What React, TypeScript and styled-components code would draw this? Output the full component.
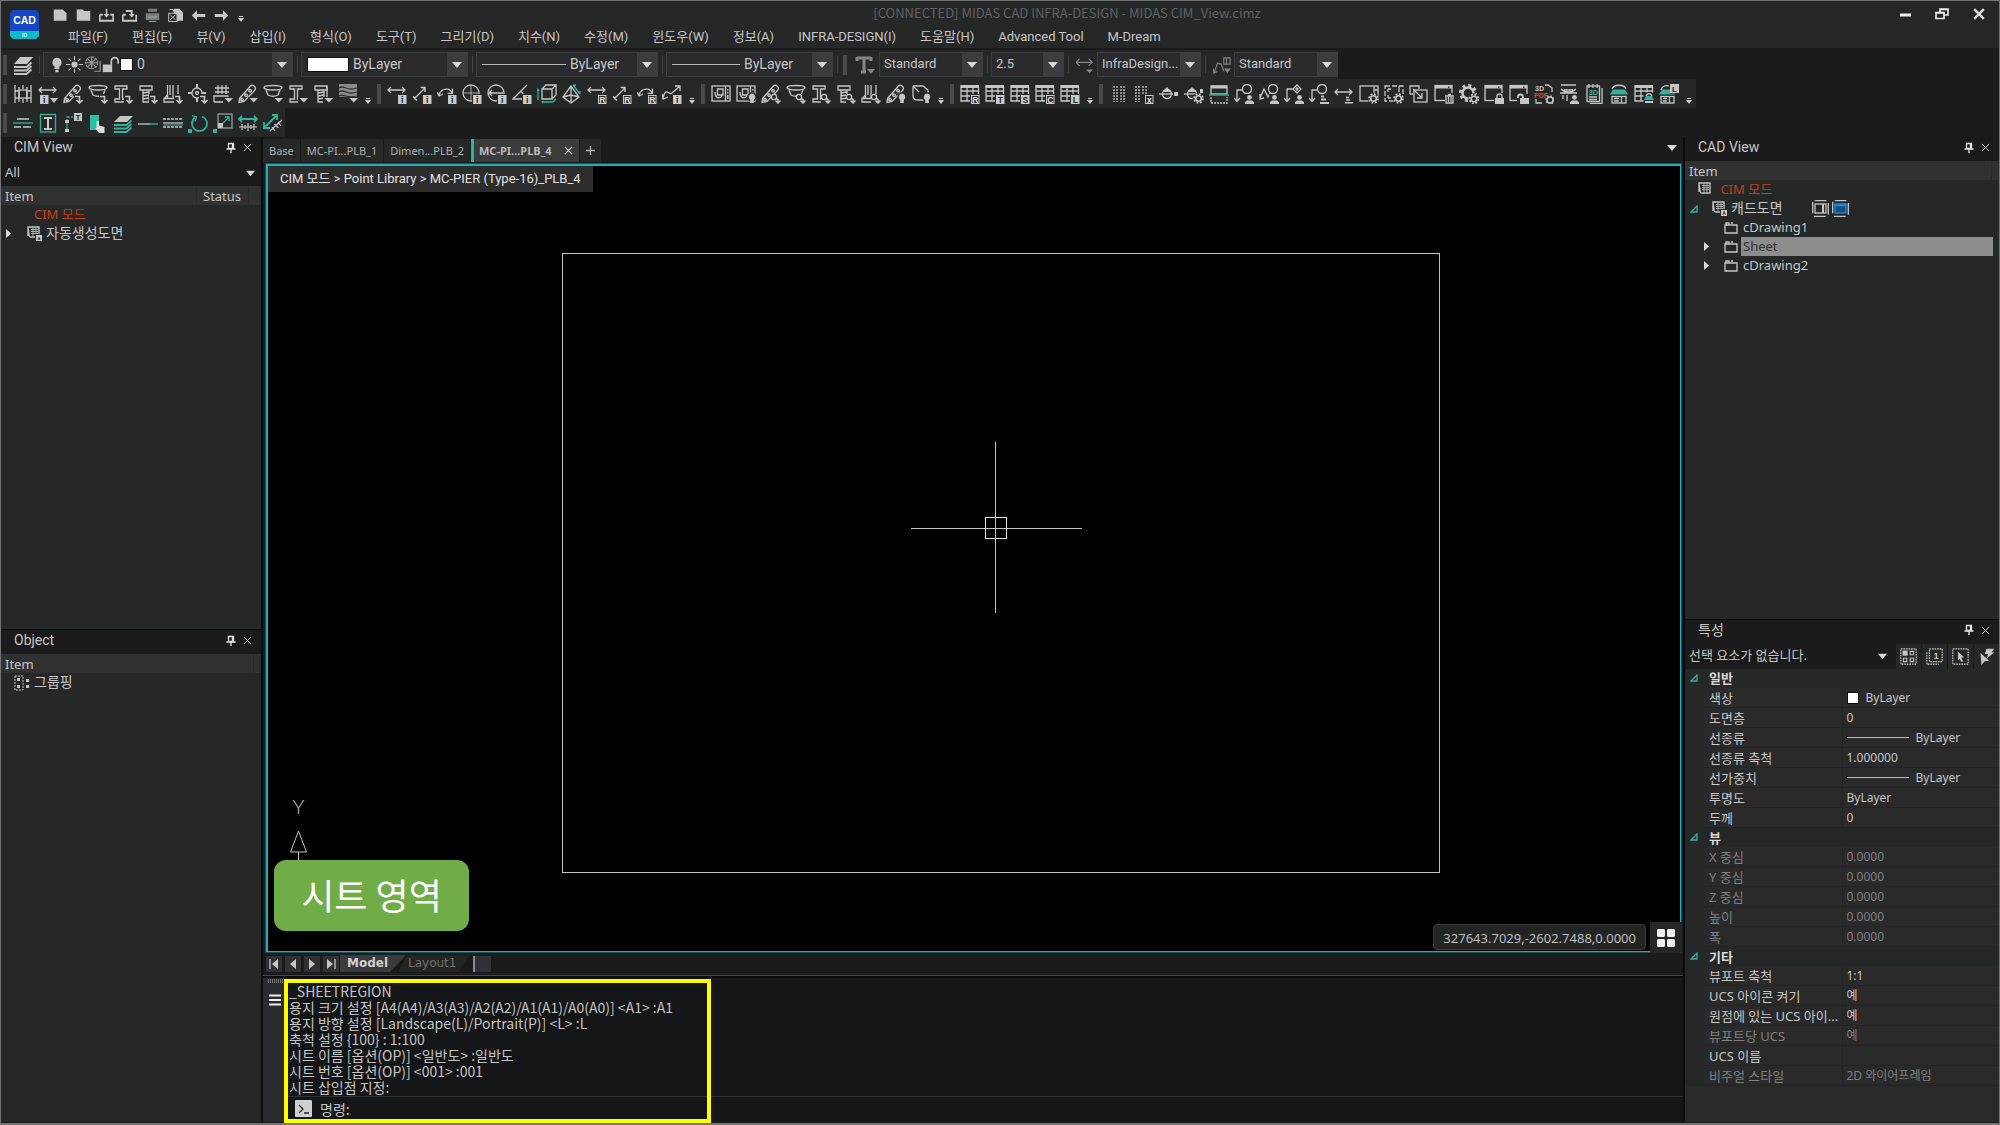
import React, { ReactNode } from "react";
import styled, { createGlobalStyle, css } from "styled-components";

const c = {
  window: "#262828",
  dark: "#1b1b1b",
  field: "#2b2b2e",
  fieldButton: "#3d3d40",
  line: "#3c3c3e",
  header: "#303232",
  text: "#c6c6c6",
  dim: "#808080",
  teal: "#35b09c",
  cyan: "#22adb5",
  red: "#c0401f",
  blue: "#1f86d8",
};

const sans = `"Noto Sans", "Noto Sans CJK KR", sans-serif`;
const round = `Roboto, "Noto Sans CJK KR", sans-serif`;
const hangul = `"Noto Sans CJK KR", sans-serif`;

const GlobalStyle = createGlobalStyle`
  *, *::before, *::after { box-sizing: border-box; }
  body { margin: 0; background: ${c.dark}; }
  button, select, input { font: inherit; color: inherit; }
  button { padding: 0; border: 0; background: none; cursor: pointer; }
`;

/* ---------- window ---------- */

const Window = styled.div`
  display: flex;
  flex-direction: column;
  min-height: 100vh;
  padding-bottom: 1px;
  border: 1px solid #737675;
  border-bottom-width: 2px;
  background: ${c.dark};
  color: ${c.text};
  font: 13px/19px ${sans};
`;

const TitleBar = styled.header`
  display: flex;
  height: 47px;
  background: ${c.window};
`;

const LogoBox = styled.div`
  width: 48px;
  padding: 9px;
`;

const TitleColumn = styled.div`
  flex: 1;
  display: flex;
  flex-direction: column;
`;

const TitleRow = styled.div`
  display: flex;
  align-items: center;
  height: 28px;
  padding-right: 2px;
`;

const QuickBar = styled.div`
  display: flex;
  align-items: center;
`;

const QuickButton = styled.button`
  display: grid;
  place-items: center;
  width: 23px;
  height: 22px;
`;

const Title = styled.h1`
  flex: 1;
  margin: 0;
  padding-bottom: 5px;
  text-align: center;
  font: 400 13px/19px ${hangul};
  color: #5f6161;
`;

const WindowButton = styled.button`
  display: grid;
  place-items: center;
  width: 37px;
  height: 26px;
  margin-bottom: 2px;
`;

const MenuBar = styled.nav`
  display: flex;
  height: 17px;
  padding-left: 7px;
`;

const MenuItem = styled.button`
  height: 15px;
  padding: 0 12px;
  font: 13px/15px ${round};
  white-space: nowrap;
`;

/* ---------- toolbars ---------- */

const Toolbars = styled.div`
  display: flex;
  flex-direction: column;
  align-items: flex-start;
  padding-top: 2px;
`;

const ToolRow = styled.div`
  display: flex;
  align-items: center;
  height: 29px;
  background: ${c.window};
`;

const Grip = styled.span`
  width: 4px;
  height: 20px;
  margin: 0 3px 0 2px;
  background-image: radial-gradient(#4a4a4a 1px, transparent 1px);
  background-size: 2px 2px;
`;

const Rule = styled.span`
  width: 1px;
  height: 17px;
  margin: 0 3px 0 4px;
  background: #444;
`;

const ToolButton = styled.button<{ $wide?: number }>`
  display: grid;
  place-items: center;
  width: ${(p) => p.$wide ?? 25}px;
  height: 29px;
`;

const OverflowButton = styled.button<{ $short?: boolean }>`
  display: grid;
  place-items: center;
  width: 15px;
  height: ${(p) => (p.$short ? 22 : 29)}px;
  padding-top: ${(p) => (p.$short ? 8 : 15)}px;
`;

const Combo = styled.label<{ $width: number; $small?: boolean }>`
  display: flex;
  align-items: center;
  width: ${(p) => p.$width}px;
  height: 25px;
  border: 1px solid ${c.line};
  background: ${c.field};
  font: ${(p) => (p.$small ? 13 : 14)}px/18px ${round};
`;

const ComboIcons = styled.span`
  display: flex;
  align-items: center;
  gap: 1px;
  padding-left: 5px;
`;

const ComboSelect = styled.select`
  flex: 1;
  min-width: 0;
  height: 21px;
  padding: 0 0 2px 4px;
  border: 0;
  background: ${c.field};
  appearance: none;
`;

const ComboArrow = styled.span`
  display: grid;
  place-items: center;
  width: 20px;
  height: 23px;
  background: ${c.fieldButton};
`;

const Swatch = styled.span<{ $width: number; $height: number }>`
  flex: none;
  width: ${(p) => p.$width}px;
  height: ${(p) => p.$height}px;
  border: 1px solid #111;
  background: #fff;
`;

const LineSample = styled.span<{ $width: number }>`
  flex: none;
  width: ${(p) => p.$width}px;
  height: 1px;
  background: #b9b9b9;
`;

/* ---------- body ---------- */

const Body = styled.main`
  flex: 1;
  display: grid;
  grid-template-columns: 260px minmax(0, 1fr) 314px;
  gap: 2px;
  background: #0c0c0c;
`;

const Side = styled.aside`
  display: flex;
  flex-direction: column;
  gap: 1px;
`;

const Panel = styled.section<{ $grow: number }>`
  flex: ${(p) => p.$grow} 1 0;
  display: flex;
  flex-direction: column;
  background: ${c.window};
`;

const PanelHead = styled.div`
  display: flex;
  align-items: center;
  height: 24px;
  padding: 0 5px 3px 13px;
  background: ${c.dark};
`;

const PanelTitle = styled.h2`
  flex: 1;
  margin: 0;
  font: 400 14px/19px ${round};
`;

const PanelButton = styled.button`
  display: grid;
  place-items: center;
  width: 17px;
  height: 18px;
`;

const FilterRow = styled.label`
  display: flex;
  align-items: center;
  height: 25px;
  padding-right: 6px;
  background: ${c.dark};
`;

const PlainSelect = styled.select`
  flex: 1;
  min-width: 0;
  height: 23px;
  padding: 0 0 2px 4px;
  border: 0;
  background: ${c.dark};
  appearance: none;
`;

const Tree = styled.table`
  width: 100%;
  border-collapse: collapse;
  table-layout: fixed;
`;

const TreeHead = styled.th<{ $width?: number }>`
  width: ${(p) => (p.$width ? `${p.$width}px` : "auto")};
  height: 19px;
  padding: 1px 0 0 ${(p) => (p.$width ? 6 : 4)}px;
  border-right: 1px solid #292b2b;
  background: ${c.header};
  text-align: left;
  font-weight: 400;
  line-height: 18px;
`;

const TreeCell = styled.td`
  height: 19px;
  padding: 0;
`;

const TreeLine = styled.div<{ $indent: number }>`
  display: flex;
  align-items: center;
  height: 19px;
  padding-left: ${(p) => p.$indent}px;
`;

const Expander = styled.button`
  display: grid;
  place-items: center;
  width: 12px;
  height: 18px;
`;

const TreeIcon = styled.span<{ $left?: number }>`
  display: grid;
  place-items: center;
  width: 20px;
  height: 18px;
  margin-left: ${(p) => p.$left ?? 0}px;
`;

const TreeText = styled.span<{ $mode?: "red" | "selected" | "large" }>`
  padding: 0 2px;
  height: 19px;
  line-height: 18px;
  white-space: nowrap;
  ${(p) => p.$mode === "red" && css`color: ${c.red};`}
  ${(p) => p.$mode === "large" && css`font-size: 14px;`}
  ${(p) =>
    p.$mode === "selected" &&
    css`
      flex: 1;
      margin-right: 6px;
      background: #8c8c8c;
      color: #303030;
    `}
`;

/* ---------- workspace ---------- */

const Workspace = styled.section`
  display: flex;
  flex-direction: column;
  min-width: 0;
  background: ${c.dark};
`;

const Tabs = styled.div`
  display: flex;
  height: 26px;
  padding: 2px 3px 1px 0;
  gap: 1px;
`;

const Tab = styled.button<{ $active?: boolean }>`
  display: flex;
  align-items: center;
  gap: 13px;
  padding: 0 6px;
  background: ${c.window};
  color: #b0b0b0;
  font-size: 11px;
  white-space: nowrap;
  ${(p) =>
    p.$active &&
    css`
      padding-left: 5px;
      border-left: 3px solid ${c.teal};
      background: #3a3b3b;
      color: #b9b9b9;
      font-weight: 700;
    `}
`;

const TabSpace = styled.span`
  flex: 1;
`;

const Canvas = styled.div`
  position: relative;
  flex: 1;
  margin: 0 1px 1px 2px;
  border: solid ${c.cyan};
  border-width: 3px 2px 2px 3px;
  outline: 1px solid #12565a;
  outline-offset: -1px;
  background: #000;
`;

const Drawing = styled.svg`
  position: absolute;
  inset: 0;
  width: 100%;
  height: 100%;
`;

const Breadcrumb = styled.div`
  position: absolute;
  left: 0;
  top: 0;
  height: 26px;
  padding: 0 12px;
  background: #2d2d2e;
  color: #e2e2e2;
  font: 13px/25px ${round};
  white-space: nowrap;
`;

const Callout = styled.div`
  position: absolute;
  left: 6px;
  bottom: 20px;
  display: grid;
  place-items: center;
  width: 195px;
  height: 71px;
  padding-bottom: 4px;
  border-radius: 12px;
  background: #70ad47;
  color: #fff;
  font: 36px/40px ${hangul};
`;

const Coordinates = styled.output`
  position: absolute;
  right: 34px;
  bottom: 1px;
  height: 26px;
  padding: 0 9px;
  border: 1px solid #3a3b3b;
  border-radius: 4px;
  background: #232525;
  color: #bdbdbd;
  font: 13px/27px ${sans};
`;

const GridButton = styled.button`
  position: absolute;
  right: -2px;
  bottom: -2px;
  display: grid;
  place-items: center;
  width: 32px;
  height: 31px;
  background: #252727;
`;

const LayoutRow = styled.div`
  display: flex;
  align-items: center;
  gap: 3px;
  height: 22px;
  padding: 0 0 2px 3px;
  border-bottom: 1px solid #474747;
`;

const StepButton = styled.button`
  display: grid;
  place-items: center;
  width: 16px;
  height: 16px;
  background: #303134;
`;

const LayoutTabs = styled.div`
  display: flex;
  height: 17px;
  margin-left: -2px;
`;

const LayoutTab = styled.button<{ $active?: boolean }>`
  width: ${(p) => (p.$active ? 66 : 72)}px;
  margin-left: ${(p) => (p.$active ? 0 : -8)}px;
  padding: 0 0 1px ${(p) => (p.$active ? 7 : 10)}px;
  background: ${(p) => (p.$active ? "#3a3b3c" : "#232525")};
  clip-path: ${(p) =>
    p.$active
      ? "polygon(0 0, 100% 0, 50px 100%, 0 100%)"
      : "polygon(9px 0, 100% 0, 60px 100%, 0 100%)"};
  color: ${(p) => (p.$active ? "#d0d0d0" : "#707272")};
  font: ${(p) => (p.$active ? 700 : 400)} 12px/15px "DejaVu Sans", sans-serif;
  text-align: left;
`;

const LayoutEnd = styled.span`
  width: 18px;
  height: 16px;
  border-left: 2px solid #8c8c8c;
  background: #303134;
`;

const Command = styled.div`
  position: relative;
  display: flex;
  height: 146px;
  border-top: 2px solid #0c0c0c;
  background: #151618;
`;

const CommandStrip = styled.div`
  display: flex;
  flex-direction: column;
  align-items: center;
  gap: 11px;
  width: 24px;
  padding-top: 1px;
  background: #2a2b2e;
`;

const StripGrip = styled.span`
  width: 15px;
  height: 4px;
  background: repeating-linear-gradient(90deg, #777 0 1px, transparent 1px 2px);
`;

const CommandMain = styled.div`
  flex: 1;
  display: flex;
  flex-direction: column;
  min-width: 0;
`;

const Log = styled.div`
  flex: 1;
  display: flex;
  flex-direction: column;
  justify-content: flex-end;
  padding: 0 0 1px 2px;
  font: 14px/16px ${hangul};
  color: #c4c4c4;
`;

const LogLine = styled.div`
  flex: none;
  height: 16px;
  white-space: pre;
`;

const Prompt = styled.label`
  display: flex;
  align-items: center;
  gap: 8px;
  height: 26px;
  padding: 0 0 2px 8px;
  border-top: 1px solid #303133;
  font: 14px/16px ${hangul};
`;

const PromptInput = styled.input`
  flex: 1;
  height: 20px;
  border: 0;
  outline: 0;
  background: transparent;
`;

const Highlight = styled.div`
  position: absolute;
  left: 21px;
  top: 1px;
  width: 427px;
  bottom: -1px;
  border: 4px solid #ffff00;
  pointer-events: none;
`;

/* ---------- properties ---------- */

const SelectionRow = styled.div`
  display: flex;
  height: 25px;
  background: ${c.dark};
`;

const SelectionLabel = styled.label`
  flex: 1;
  display: flex;
  align-items: center;
  padding-right: 8px;
`;

const SelectionButton = styled.button`
  display: grid;
  place-items: center;
  width: 25px;
  height: 25px;
  margin-left: 1px;
  background: ${c.window};
`;

const Properties = styled.table`
  width: 100%;
  border-collapse: collapse;
  table-layout: fixed;
  font-size: 12px;
`;

const Gutter = styled.td`
  width: 19px;
  padding: 0 0 0 3px;
  background: ${c.window};
`;

const GroupTitle = styled.th`
  height: 19px;
  padding: 0 5px;
  background: ${c.window};
  text-align: left;
  font-size: 13px;
  line-height: 18px;
  color: #dadada;
`;

const PropName = styled.th<{ $dim?: boolean }>`
  width: 138px;
  height: 20px;
  padding: 0 0 0 5px;
  border-right: 1px solid #242424;
  border-bottom: 1px solid #242424;
  text-align: left;
  font-weight: 400;
  font-size: 13px;
  line-height: 18px;
  white-space: nowrap;
  color: ${(p) => (p.$dim ? c.dim : c.text)};
`;

const PropValue = styled.td<{ $dim?: boolean }>`
  padding: 0 0 0 4px;
  border-bottom: 1px solid #242424;
  line-height: 18px;
  color: ${(p) => (p.$dim ? c.dim : c.text)};
`;

const ValueLine = styled.div`
  display: flex;
  align-items: center;
  gap: 7px;
`;

const PropPanel = styled(Panel)`
  background: #2a2a2a;
`;

/* ---------- icons ---------- */

const Svg = styled.svg`
  display: block;
  fill: none;
  stroke: currentColor;
  stroke-width: 1.3;
`;

const Icon = ({ size = 20, box = 20, children }: { size?: number; box?: number; children: ReactNode }) => (
  <Svg width={size} height={size} viewBox={`0 0 ${box} ${box}`} aria-hidden="true">
    {children}
  </Svg>
);

const F = ({ d, fill = "currentColor" }: { d: string; fill?: string }) => <path d={d} fill={fill} stroke="none" />;
const P = ({ d, color, w }: { d: string; color?: string; w?: number }) => (
  <path d={d} stroke={color ?? "currentColor"} strokeWidth={w ?? 1.3} />
);

const Letter = ({ x, y, size = 8, color = "currentColor", children }: { x: number; y: number; size?: number; color?: string; children: string }) => (
  <text x={x} y={y} fontSize={size} fontWeight={700} fontFamily="Liberation Sans, sans-serif" textAnchor="middle" fill={color} stroke="none">
    {children}
  </text>
);

const Badge = ({ t = "i", solid = true, x = 11 }: { t?: string; solid?: boolean; x?: number }) => (
  <>
    <rect x={x - 1} y={10} width={10} height={10} fill={c.window} stroke="none" />
    <rect x={x + 0.5} y={11.5} width={7.5} height={8} fill={solid ? "#c9c9c9" : c.window} stroke="#c9c9c9" strokeWidth={1} />
    <Letter x={x + 4.25} y={18.5} size={8.5} color={solid ? "#1f1f1f" : "#e5e5e5"}>{t}</Letter>
  </>
);
const Down = () => (
  <>
    <F d="M11 10h9v10h-9z" fill={c.window} />
    <P d="M12 12.500h4.500v6M13.500 16l3 3 3-3" w={1.6} />
  </>
);
const Tri = () => (
  <>
    <F d="M10 13h10v7H10z" fill={c.window} />
    <F d="M11.500 14h8.500l-4.250 4.500z" />
  </>
);
const Gear = ({ x = 14.5, y = 14.5 }: { x?: number; y?: number }) => (
  <>
    <circle cx={x} cy={y} r={5.8} fill={c.window} stroke="none" />
    <circle cx={x} cy={y} r={4.4} strokeWidth={1.8} strokeDasharray="1.8 1.65" />
    <circle cx={x} cy={y} r={2.8} strokeWidth={1.6} />
  </>
);
const Person = () => (
  <>
    <F d="M10 10h10v10H10z" fill={c.window} />
    <F d="M15.500 11a2.400 2.400 0 1 1 0 4.800 2.400 2.400 0 0 1 0-4.800zM11 20v-2l2-1.500h5l2 1.500v2z" />
  </>
);
const Bars = () => <P d="M12 12.500h3M12 15.500h5M11 19h9" w={1.8} />;
const Node = () => (
  <>
    <F d="M10 10h10v10H10z" fill={c.window} />
    <circle cx={13} cy={13} r={2.6} />
    <P d="M15 14.500l2 1v3.500M14.500 16.500l2.500 2.500 2.500-2.500" w={1.5} />
  </>
);
const Bulb = () => (
  <>
    <circle cx={16} cy={13} r={4.8} fill={c.window} stroke="none" />
    <F d="M16 9.500a3.600 3.600 0 0 1 1.800 6.500v3h-3.600v-3a3.600 3.600 0 0 1 1.800-6.500z" />
  </>
);
const Frame = () => (
  <>
    <rect x={1} y={1.5} width={17} height={15} />
    <P d="M1 3h17" w={3} />
    <F d="M14 2.500h1.500V4H14z" fill="#333" />
  </>
);
const Lock = () => (
  <>
    <F d="M10 9h10v11H10z" fill={c.window} />
    <path d="M13 14.500v-2a2.500 2.500 0 0 1 5 0v2" />
    <F d="M11 14h9v6h-9z" />
  </>
);

const pen = <P d="M1.500 14.500 12 2.500a3 3 0 0 1 4.500 4L6 17.500l-5 1zM4 14.500a1.200 1.200 0 1 0 .1 0M8 10a1.200 1.200 0 1 0 .1 0M12 5.500a1.200 1.200 0 1 0 .1 0" />;
const slab = <P d="M1 3.500C1 2 5 1.500 10 1.500s9 .5 9 2S15 6 10 6 1 5 1 3.500zM3 6l2 5c3 1.500 7 1.500 10 0l2-5" />;
const beam = <P d="M2 2h12v3H9.500v10H14v3H2v-3h4.500V5H2z" />;
const bolt = <P d="M2 2h12v4H2zM5 6v12h6V6M5 9l6-1M5 12l6-1M5 15l6-1" />;
const piles = <P d="M4.500 1v13M10 1v13M15 1v13M7 1v10M1 14.500h14v3.500H1zM4.500 11l-3 3.500" />;
const hDim = <P d="M1 6h17M4 3 1 6l3 3M15 3l3 3-3 3" />;
const diag = <P d="M2 15 13 4M8.500 3.500H13V8M1 12.500l4 4" />;
const arc = <P d="M2 11C4 4 13 3 15 9M15.500 4.500V9.500H10.500M0 8l2 4 4-2" />;
const gridShape = (
  <>
    <path d="M1 2.500h18" strokeWidth={3} />
    <P d="M1 1v16h9M7 3v14M13 3v8M18.500 3v8M1 7h18M1 12h10" />
  </>
);
const leader = (
  <>
    <circle cx={13} cy={5} r={4.5} />
    <P d="M8.500 6H3v11M0 14l3 3.500 3-3.500" />
  </>
);
const lens = (
  <>
    <rect x={1} y={2} width={18} height={15} />
    <P d="M14.500 2v15M4 8c0 8 7 7 8 1M6.500 5H12v6H6.500z" />
    <F d="M16 5h1.500v1.500H16zM16 8h1.500v1.500H16zM16 11h1.500v4H16z" />
  </>
);

const groupA: [string, ReactNode][] = [
  ["Grid lines", <><P d="M2 1v18M6 3v15M14 3v15M18 1v18M10 1v4M10 15v4M2 7h4M14 7h4M2 14h4M14 14h4" /><rect x={6} y={6} width={8} height={8} /></>],
  ["Dimension info", <>{hDim}<Badge x={2} /><F d="M12 14h8l-4 5z" /></>],
  ["Bridge pen", <>{pen}<Down /></>],
  ["Deck", <>{slab}<Down /></>],
  ["Girder", <>{beam}<Down /></>],
  ["Bolt", <>{bolt}<Down /></>],
  ["Piles", <>{piles}<Down /></>],
  ["Target", <><circle cx={9} cy={9} r={5} /><circle cx={9} cy={9} r={1.500} /><P d="M9 0v4M9 14v4M0 9h4M14 9h4" w={2} /><Down /></>],
  ["Pile cap", <><P d="M5 1v9M9 1v9M13 1v9M2 4h14M2 8h14M1 18V12h14v3M1 18h11" /><Tri /></>],
  ["Pen list", <>{pen}<Tri /></>],
  ["Deck list", <>{slab}<Tri /></>],
  ["Girder list", <>{beam}<Tri /></>],
  ["Bolt list", <>{bolt}<P d="M14 2v12" /><Tri /></>],
  ["Terrain", <><F d="M1 0h18v13H1z" fill="#8b8d8d" /><P d="M1 4c5-4 7 4 18 0M1 8c5-4 8 4 18 0M1 12c5-3 8 3 18 0" color="#333" /><Tri /></>],
];
const groupB: [string, ReactNode][] = [
  ["Linear info", <>{hDim}<Badge /></>],
  ["Aligned info", <>{diag}<Badge /></>],
  ["Arc info", <>{arc}<Badge /></>],
  ["Radius info", <><circle cx={9} cy={9} r={8} /><P d="M1 9h15M9 2v14" w={0.8} /><Badge /></>],
  ["Diameter info", <><circle cx={9} cy={9} r={8} /><P d="M2 9h14M5 6 2 9l3 3" /><Badge /></>],
  ["Angle info", <><P d="M15 1 1 15h12M8 7c3 1 4 4 4 8" /><Badge /></>],
  ["Solid size", <><P d="M5 5 9 1h10v10l-4 4M5 5h10v10H5zM15 5l4-4" /><P d="M1 5v11M0 7l1-2 1 2M5 18h11M6 17l-1 1 1 1M16 18l3-3" color={c.teal} /></>],
  ["Pyramid size", <><P d="M9 2 1 13l8 6 8-6zM9 2v17M1 13l8-2 8 2" /><P d="M11 1l7 9M11 1h3M18 10V7" color={c.teal} /></>],
  ["Linear result", <>{hDim}<Badge t="R" solid={false} /></>],
  ["Aligned result", <>{diag}<Badge t="R" solid={false} /></>],
  ["Arc result", <>{arc}<Badge t="R" solid={false} /></>],
  ["Curve info", <><P d="M1 14c3-12 6-2 9-5l8-7M13 2h5v5M0 10l1 5 5-2" /><Badge /></>],
];
const groupC: [string, ReactNode][] = [
  ["Section view", lens],
  ["Section light", <>{lens}<Bulb /></>],
  ["Pen node", <>{pen}<Node /></>],
  ["Deck node", <>{slab}<Node /></>],
  ["Girder node", <>{beam}<Node /></>],
  ["Bolt node", <>{bolt}<Node /></>],
  ["Pile node", <>{piles}<Node /></>],
  ["Pen light", <>{pen}<Bulb /></>],
  ["Shape light", <><path d="M3 2h9l5 4v7c0 2-1 3-3 3H7c-3 0-5-1-5-4V4c0-1 0-2 1-2z" /><P d="M3 3l5 5" /><Bulb /></>],
];
const groupD: [string, ReactNode][] = [
  ["Table R", <>{gridShape}<Badge t="R" solid={false} /></>],
  ["Table T", <>{gridShape}<Badge t="T" /></>],
  ["Table S", <>{gridShape}<Badge t="S" /></>],
  ["Table C", <>{gridShape}<Badge t="C" solid={false} /></>],
  ["Table L", <>{gridShape}<Badge t="L" /></>],
];
const dots = (
  <g strokeDasharray="2 1">
    <P d="M5 2v16M8 2v16M12 2v16M15 2v16" />
  </g>
);
const groupE: [string, ReactNode][] = [
  ["Hatch", dots],
  ["Remove hatch", <><g strokeDasharray="2 1"><P d="M2 2v16M5 2v16M9 2v8M12 2v8" /></g><Badge t="x" solid={false} /></>],
  ["Marker", <><circle cx={8} cy={10} r={4.500} /><P d="M0 10h14" /><F d="M3.500 8 8 3l4.500 5zM15 8h4v4h-4z" /></>],
  ["Marker settings", <><circle cx={8} cy={10} r={4.500} /><P d="M0 10h14" /><F d="M3.500 8 8 3l4.500 5zM16 5h3v4h-3z" /><Gear /></>],
  ["Split sheet", <><rect x={2} y={2} width={16} height={8} /><P d="M2 3h16" w={3} /><g strokeDasharray="2 1"><P d="M2 13v6h16v-6" /></g><P d="M0 11h20" color={c.teal} /></>],
  ["Leader user", <>{leader}<Person /></>],
  ["Leader curve user", <><circle cx={14} cy={5} r={4.500} /><P d="M1 14 5 5l4 8 2-4M1 10v5l4-1" /><Person /></>],
  ["Leader node user", <><P d="M13 1l4 4-4 4-4-4zM9 5H3v12M0 14l3 3.500 3-3.500" /><circle cx={13} cy={5} r={1} /><Person /></>],
  ["Leader list", <>{leader}<Bars /></>],
  ["Dimension list", <><P d="M1 8h17M4 5 1 8l3 3M15 5l3 3-3 3" /><P d="M12 13.500h3M12 16h4M11 18.800h8" w={1.500} /></>],
  ["Sheet settings", <><rect x={1} y={2} width={18} height={15} /><P d="M15 2v8M15 6h4" /><Gear /></>],
  ["Region settings", <><rect x={1} y={2} width={18} height={15} strokeDasharray="5 2" /><P d="M4 5h3M4 5v3M4 14v-3M4 14h3M15 2v6" /><Gear /></>],
  ["Move region", <><P d="M1 10V2h9v3M1 10h3" /><rect x={5} y={6} width={13} height={12} /><P d="M4 5l9 9M13 9v5H8" /></>],
  ["Delete sheet", <><Frame /><F d="M11 9h9v11h-9z" fill={c.window} /><P d="M11 12h9M12 13v6h7v-6M14.500 13v5M17 13v5M14 10.500h3" /></>],
  ["Options", <><circle cx={9} cy={9} r={7.500} strokeWidth={3} strokeDasharray="3 2.890" /><circle cx={9} cy={9} r={5.500} strokeWidth={2.500} /><Gear x={15} y={15} /></>],
  ["Lock sheet", <><Frame /><Lock /></>],
  ["Unlock sheet", <><Frame /><F d="M8 10h12v10H8z" fill={c.window} /><P d="M9 14v-1a2.500 2.500 0 0 1 5 0v1" w={1.800} /><F d="M11 14h9v6h-9z" /></>],
  ["3D PDF", <><Letter x={5.500} y={7} size={7}>3D</Letter><P d="M11 1h3l4 3v4M2 15v4h6" /><Letter x={7} y={14} size={7} color="#e0462b">PDF</Letter><circle cx={16} cy={16} r={3} strokeWidth={1.500} /><circle cx={16} cy={16} r={4} strokeWidth={1.500} strokeDasharray="1.500 1.640" /></>],
  ["Section user", <><P d="M2 1h15M2 5c4 4 11 4 15 0M1 9h17M4 11v4M8 11v6M5 6h9" /><Person /></>],
  ["3D report", <><P d="M6 19.500h12V4" /><rect x={3} y={2} width={12.500} height={15.500} /><P d="M5 0v4M9 0v4M13 0v4M5 13h8M5 15.500h8" /><Letter x={9.500} y={11} size={7.500} color={c.teal}>3D</Letter></>],
  ["Stamp", <><P d="M3 5c2-5 12-5 14 0" /><F d="M1 10.500l3-5h12l3 5z" fill={c.teal} /><rect x={3} y={12.500} width={14} height={6.500} /><P d="M5 14.500h5M5 17h5M12.500 12v7" /></>],
  ["Table stamp", <>{gridShape}<F d="M9.500 8.500h10.500V20H9.500z" fill={c.window} /><P d="M12 12c1-3 5-3 6 0" /><F d="M10 16l2-4h6l2 4z" fill={c.teal} /><P d="M11 18h8" w={2} /></>],
  ["Stamp L", <><P d="M2 6c1-4 5-5 8-4" /><F d="M0 10.500l3-5h8v4h5v1z" fill={c.teal} /><rect x={2} y={12.500} width={13} height={6.500} /><P d="M4 14.500h4M4 17h4M10.500 12v7" /><F d="M11 0h9v9h-9z" /><Letter x={15.500} y={7.500} size={8} color="#222">L</Letter></>],
];
const row3: [string, ReactNode][] = [
  ["Align lines", <><P d="M4 6h12M1 14h7M10 14h8" /><P d="M0 10h20" color={c.teal} /></>],
  ["Section frame", <><rect x={2.500} y={1.500} width={15} height={17.500} stroke={c.teal} /><P d="M6 5h8M10 5v11M6 16h8" w={2} /></>],
  ["Leader text", <><g strokeDasharray="3 1.500"><P d="M4 9V4h6" color={c.teal} /></g><P d="M4 9v9" color={c.teal} /><F d="M2 7h4v3H2zM2 16h4v3H2zM11 0h8v8h-8z" /><Letter x={15} y={7} size={8} color="#222">T</Letter></>],
  ["Pick block", <><F d="M2 2h9v15H2z" fill="#27c2a6" /><F d="M8.500 8h2.500v4.500l5.500 1.500v6H11l-4-5h1.500z" fill="#dcdcdc" /></>],
  ["Layer stack", <><P d="M1 12h12.500l5-4.500M1 15.500h12.500l5-4.500M1 19h12.500l5-4.500" color={c.teal} w={1.800} /><F d="M1 9l6-6h13l-6 6z" /></>],
  ["Segment", <><P d="M0 11h12" /><P d="M12 11h8" color={c.teal} /></>],
  ["Line styles", <><P d="M0 10h20" /><g strokeDasharray="3 1"><P d="M0 6h20M0 14h20" /></g><P d="M0 12h20" color={c.teal} w={1} /></>],
  ["Rotate", <><path d="M7 4.500a7.500 7.500 0 1 0 7-1" stroke={c.teal} strokeWidth={1.700} /><P d="M4 2.500l4.500 1.500L7 8.500" color={c.teal} /><F d="M0 16h4v4H0z" fill={c.teal} /></>],
  ["Scale", <><rect x={5} y={1} width={14} height={14} stroke="#9a9a9a" /><P d="M9 11l7-7M12 4h4v4" color={c.teal} /><F d="M5 10h5v5H5z" /><F d="M0 16h4v4H0z" fill={c.teal} /></>],
  ["Stretch", <><P d="M1 6h18M4 3 1 6l3 3M16 3l3 3-3 3" color={c.teal} w={1.800} /><P d="M1 14h18M4 11v6M7 12v4M10 10v8M13 12v4M16 11v6" w={1.200} /></>],
  ["Edit length", <><P d="M2 14 14 2M9 2h5v5M1 9v6h6" color={c.teal} w={1.800} /><P d="M7 18 19 7M9 14l3 4M11.500 11l4 4M15 9l3 4" w={1.200} /></>],
];

const caret = (size = 10) => (
  <Icon size={size} box={10}><F d="M0 2h10L5 8z" fill="#d8d8d8" /></Icon>
);
const overflow = <Icon size={6} box={6}><F d="M1 0h4v1H1zM0 2h6L3 6z" fill="#cfcfcf" /></Icon>;
const pin = <Icon size={12} box={12}><P d="M3.500 1.500h5v5h-5zM1.500 7h9M6 7v4M7.500 2v4" color="#e6e6e6" /></Icon>;
const cross = (size = 10, w = 1.2) => <Icon size={size} box={10}><P d="M1 1l8 8M9 1l-8 8" color="#dcdcdc" w={w} /></Icon>;
const open = <Icon size={8} box={8}><P d="M1 7h6V1z" color={c.teal} /></Icon>;
const closed = <Icon size={9} box={9}><F d="M2 0l5 4.500L2 9z" fill="#d8d8d8" /></Icon>;
const folder = <Icon size={14} box={14}><P d="M1 4h12v8H1zM2 4V2h3v2M7 2h2" /></Icon>;
const sheetIcon = (badge?: string) => (
  <Icon size={17} box={17}>
    <P d="M2 2h11v10H5c-2 0-2-1-2-3zM2 2v9" />
    <P d="M5 4.500h7M5 6.500h7M5 8.500h7M7 3v8M10 3v8" w={0.8} />
    {badge && <><F d="M9 9h8v8H9z" fill={c.window} /><rect x={10} y={10} width={6} height={6} fill="#ccc" stroke="none" /><Letter x={13} y={15} size={5} color="#222">{badge}</Letter></>}
  </Icon>
);
const brackets = <rect x={0.7} y={0.7} width={15.6} height={15.6} rx={2} strokeDasharray="11.6 3.14" />;

const ToolGroup = ({ items, more = true }: { items: [string, ReactNode][]; more?: boolean }) => (
  <>
    <Grip />
    {items.map(([name, art]) => (
      <ToolButton key={name} aria-label={name}><Icon>{art}</Icon></ToolButton>
    ))}
    {more && <OverflowButton aria-label="More tools">{overflow}</OverflowButton>}
  </>
);

const Choice = ({ label, value, width, children }: { label: string; value: string; width: number; children?: ReactNode }) => (
  <Combo $width={width} $small={!children}>
    {children && <ComboIcons>{children}</ComboIcons>}
    <ComboSelect aria-label={label} defaultValue={value}><option>{value}</option></ComboSelect>
    <ComboArrow>{caret()}</ComboArrow>
  </Combo>
);

const quick: [string, ReactNode][] = [
  ["New", <F d="M1 2h12l5 5v10H1z" />],
  ["Open", <F d="M1 2h8l2 2h8v13H1z" />],
  ["Save", <><P d="M1 9v8h18V9h-4M1 9h4" w={2.400} /><F d="M9 1h2v7h3l-4 5-4-5h3z" /></>],
  ["Save as", <><P d="M1 9v8h18V9M1 9h4M5 4h8v4" w={2.400} /><F d="M9 8h8l-4 5z" /></>],
  ["Print", <g color="#7b7d7d"><F d="M4 1h12v4H4zM1 7h18v9H1z" /><P d="M4 12h12M5 18h10" color="#a8a8a8" /></g>],
  ["Export", <><F d="M8 1h7l5 5v11H8z" /><rect x={1} y={7} width={11} height={11} fill={c.window} /><P d="M3 9l7 7M10 9l-7 7M2 2h5v3" /></>],
  ["Undo", <F d="M1 10l7-7v5h11v4H8v5z" />],
  ["Redo", <F d="M19 10l-7-7v5H1v4h11v5z" />],
];

const menu = ["파일(F)", "편집(E)", "뷰(V)", "삽입(I)", "형식(O)", "도구(T)", "그리기(D)", "치수(N)", "수정(M)", "윈도우(W)", "정보(A)", "INFRA-DESIGN(I)", "도움말(H)", "Advanced Tool", "M-Dream"];

const log = [
  "_SHEETREGION",
  "용지 크기 설정 [A4(A4)/A3(A3)/A2(A2)/A1(A1)/A0(A0)] <A1> :A1",
  "용지 방향 설정 [Landscape(L)/Portrait(P)] <L> :L",
  "축척 설정 {100} : 1:100",
  "시트 이름 [옵션(OP)] <일반도> :일반도",
  "시트 번호 [옵션(OP)] <001> :001",
  "시트 삽입점 지정:",
];

type Prop = { name: string; value: string; dim?: boolean; mark?: "swatch" | "line" };
const groups: { title: string; rows: Prop[] }[] = [
  {
    title: "일반",
    rows: [
      { name: "색상", value: "ByLayer", mark: "swatch" },
      { name: "도면층", value: "0" },
      { name: "선종류", value: "ByLayer", mark: "line" },
      { name: "선종류 축척", value: "1.000000" },
      { name: "선가중치", value: "ByLayer", mark: "line" },
      { name: "투명도", value: "ByLayer" },
      { name: "두께", value: "0" },
    ],
  },
  {
    title: "뷰",
    rows: ["X 중심", "Y 중심", "Z 중심", "높이", "폭"].map((name) => ({ name, value: "0.0000", dim: true })),
  },
  {
    title: "기타",
    rows: [
      { name: "뷰포트 축척", value: "1:1" },
      { name: "UCS 아이콘 켜기", value: "예" },
      { name: "원점에 있는 UCS 아이...", value: "예" },
      { name: "뷰포트당 UCS", value: "예", dim: true },
      { name: "UCS 이름", value: "" },
      { name: "비주얼 스타일", value: "2D 와이어프레임", dim: true },
    ],
  },
];

const Head = ({ title }: { title: string }) => (
  <PanelHead>
    <PanelTitle>{title}</PanelTitle>
    <PanelButton aria-label={`Pin ${title}`}>{pin}</PanelButton>
    <PanelButton aria-label={`Close ${title}`}>{cross(9, 1)}</PanelButton>
  </PanelHead>
);

const layers = <><F d="M1 9l6-7h13l-6 7z" /><P d="M1 12h12.500l5-4.500M1 15.500h12.500l5-4.500M1 19h12.500l5-4.500" w={1.800} /></>;

export default function App() {
  return (
    <Window>
      <GlobalStyle />
      <TitleBar>
        <LogoBox>
          <Icon size={29} box={29}>
            <F d="M3 0h23l3 3v18H0V3z" fill="#1646c4" />
            <F d="M0 21h29v5l-3 3H3l-3-3z" fill="#10b9c9" />
            <Letter x={14.5} y={14} size={10.500} color="#fff">CAD</Letter>
            <Letter x={14.5} y={27} size={5} color="#d9f6f8">ID</Letter>
          </Icon>
        </LogoBox>
        <TitleColumn>
          <TitleRow>
            <QuickBar>
              {quick.map(([name, art]) => (
                <QuickButton key={name} aria-label={name}><Icon size={15}>{art}</Icon></QuickButton>
              ))}
              <OverflowButton $short aria-label="Customize">{overflow}</OverflowButton>
            </QuickBar>
            <Title>[CONNECTED] MIDAS CAD INFRA-DESIGN - MIDAS CIM_View.cimz</Title>
            <WindowButton aria-label="Minimize"><Icon size={14} box={14}><P d="M2 8h11" color="#eee" w={3} /></Icon></WindowButton>
            <WindowButton aria-label="Restore"><Icon size={14} box={14}><P d="M1 5.500h8v6H1zM1 6h8M5 5V2h8v6H9M5 2.500h8" color="#eee" w={1.600} /></Icon></WindowButton>
            <WindowButton aria-label="Close">{cross(12, 2)}</WindowButton>
          </TitleRow>
          <MenuBar>
            {menu.map((m) => <MenuItem key={m}>{m}</MenuItem>)}
          </MenuBar>
        </TitleColumn>
      </TitleBar>

      <Toolbars>
        <ToolRow>
          <Grip />
          <ToolButton aria-label="Layers"><Icon>{layers}</Icon></ToolButton>
          <Rule />
          <Choice label="Layer" value="0" width={250}>
            <Icon size={16} box={20}><F d="M10 1a6 6 0 0 1 3 11v3H7v-3a6 6 0 0 1 3-11zM8 16h4v3H8z" /></Icon>
            <Icon size={17}><circle cx={10} cy={10} r={3} fill="currentColor" /><P d="M10 0v5M10 15v5M0 10h5M15 10h5M3 3l3 3M14 14l3 3M17 3l-3 3M6 14l-3 3" /></Icon>
            <Icon size={17}><circle cx={9} cy={8} r={7} stroke="#9a9a9a" strokeDasharray="3 1" /><P d="M9 1v14M2 8h14M4 3l10 10M14 3 4 13M12 18h7V6" color="#9a9a9a" /></Icon>
            <Icon size={17}><F d="M1 10h11v9H1z" /><P d="M11 10V6a4 4 0 0 1 8 0v3" w={2} /></Icon>
            <Swatch $width={13} $height={13} />
          </Choice>
          <Rule />
          <Choice label="Color" value="ByLayer" width={167}><Swatch $width={42} $height={15} /></Choice>
          <Rule />
          <Choice label="Linetype" value="ByLayer" width={182}><LineSample $width={84} /></Choice>
          <Rule />
          <Choice label="Lineweight" value="ByLayer" width={167}><LineSample $width={68} /></Choice>
          <Rule />
          <Grip />
          <ToolButton aria-label="Text style" $wide={29}><Icon><P d="M2 3h14M2 2v4M16 2v4M9 3v14M6 17h5" color="#858585" w={3} /><F d="M12 14h8l-4 5z" fill="#858585" /></Icon></ToolButton>
          <Choice label="Text style" value="Standard" width={104} />
          <Rule />
          <Choice label="Text height" value="2.5" width={73} />
          <Rule />
          <ToolButton aria-label="Dimension style"><Icon size={18}><g color="#858585"><P d="M0 7h18M4 3 0 7l4 4M14 3l4 4-4 4" /><F d="M11 15h8l-4 4z" /></g></Icon></ToolButton>
          <Choice label="Dimension style" value="InfraDesign..." width={104} />
          <Rule />
          <ToolButton aria-label="Leader style"><Icon size={18}><g color="#858585"><P d="M1 19 5 8l4 1 3 8M0 14l1 5 4-2M12 2h7v7h-7zM15 2v7" /><F d="M12 14h8l-4 5z" /></g></Icon></ToolButton>
          <Choice label="Leader style" value="Standard" width={104} />
        </ToolRow>
        <ToolRow>
          <ToolGroup items={groupA} />
          <ToolGroup items={groupB} />
          <ToolGroup items={groupC} />
          <ToolGroup items={groupD} />
          <ToolGroup items={groupE} />
        </ToolRow>
        <ToolRow>
          <ToolGroup items={row3} more={false} />
        </ToolRow>
      </Toolbars>

      <Body>
        <Side>
          <Panel $grow={1}>
            <Head title="CIM View" />
            <FilterRow>
              <PlainSelect aria-label="Filter"><option>All</option></PlainSelect>
              {caret(9)}
            </FilterRow>
            <Tree>
              <thead><tr><TreeHead>Item</TreeHead><TreeHead $width={52}>Status</TreeHead><TreeHead $width={12} aria-label="End" /></tr></thead>
              <tbody>
                <tr><TreeCell colSpan={3}><TreeLine $indent={31}><TreeText $mode="red">CIM 모드</TreeText></TreeLine></TreeCell></tr>
                <tr><TreeCell colSpan={3}><TreeLine $indent={1}><Expander aria-label="Expand">{closed}</Expander><TreeIcon $left={10}>{sheetIcon("a")}</TreeIcon><TreeText $mode="large">자동생성도면</TreeText></TreeLine></TreeCell></tr>
              </tbody>
            </Tree>
          </Panel>
          <Panel $grow={1}>
            <Head title="Object" />
            <Tree>
              <thead><tr><TreeHead>Item</TreeHead><TreeHead $width={6} aria-label="End" /></tr></thead>
              <tbody>
                <tr><TreeCell colSpan={2}><TreeLine $indent={11}><TreeIcon><Icon size={16} box={16}><rect x={1} y={1} width={8} height={14} strokeDasharray="2 1" strokeWidth={1} /><F d="M3 3h3v3H3zM3 10h3v3H3zM12 4h3v3h-3zM12 10h3v3h-3z" /></Icon></TreeIcon><TreeText $mode="large">그룹핑</TreeText></TreeLine></TreeCell></tr>
              </tbody>
            </Tree>
          </Panel>
        </Side>

        <Workspace>
          <Tabs>
            <Tab>Base</Tab>
            <Tab>MC-PI...PLB_1</Tab>
            <Tab>Dimen...PLB_2</Tab>
            <Tab $active>MC-PI...PLB_4{cross(9, 1.4)}</Tab>
            <Tab aria-label="New tab"><Icon size={9} box={9}><P d="M4.500 0v9M0 4.500h9" /></Icon></Tab>
            <TabSpace />
            <PanelButton aria-label="Tab list">{caret()}</PanelButton>
          </Tabs>
          <Canvas>
            <Drawing viewBox="0 0 1412 785">
              <g fill="none" stroke="#c4c4c4" strokeWidth="1">
                <rect x="294.500" y="87.500" width="877" height="619" />
                <path d="M643 362.500h171M727.500 276v171" />
                <rect x="717.500" y="351.500" width="21" height="21" stroke="#e4e4e4" />
                <path d="M30.500 665l-8 21h16zM30.500 686v10" />
              </g>
              <text x="30.500" y="648" textAnchor="middle" fontSize="20" fontFamily="Lato, sans-serif" fontWeight="300" fill="#c4c4c4">Y</text>
            </Drawing>
            <Breadcrumb>CIM 모드 &gt; Point Library &gt; MC-PIER (Type-16)_PLB_4</Breadcrumb>
            <Callout>시트 영역</Callout>
            <Coordinates>327643.7029,-2602.7488,0.0000</Coordinates>
            <GridButton aria-label="Display options"><Icon size={18} box={18}><F d="M1 0h6l1 1v6l-1 1H1L0 7V1zM11 0h6l1 1v6l-1 1h-6l-1-1V1zM1 10h6l1 1v6l-1 1H1l-1-1v-6zM11 10h6l1 1v6l-1 1h-6l-1-1v-6z" fill="#f0f0f0" /></Icon></GridButton>
          </Canvas>
          <LayoutRow>
            <StepButton aria-label="First"><Icon size={12} box={12}><P d="M2 1v10" /><F d="M10 1v10L4 6z" /></Icon></StepButton>
            <StepButton aria-label="Previous"><Icon size={12} box={12}><F d="M9 1v10L3 6z" /></Icon></StepButton>
            <StepButton aria-label="Next"><Icon size={12} box={12}><F d="M3 1v10l6-5z" /></Icon></StepButton>
            <StepButton aria-label="Last"><Icon size={12} box={12}><F d="M2 1v10l6-5z" /><P d="M10 1v10" /></Icon></StepButton>
            <LayoutTabs>
              <LayoutTab $active>Model</LayoutTab>
              <LayoutTab>Layout1</LayoutTab>
            </LayoutTabs>
            <LayoutEnd />
          </LayoutRow>
          <Command>
            <CommandStrip>
              <StripGrip />
              <Icon size={12} box={12}><P d="M0 1.500h12M0 6h12M0 10.500h12" color="#f0f0f0" w={2} /></Icon>
            </CommandStrip>
            <CommandMain>
              <Log>{log.map((l) => <LogLine key={l}>{l}</LogLine>)}</Log>
              <Prompt>
                <Icon size={17} box={17}><rect x={0} y={0} width={17} height={17} rx={1} fill="#cfcfcf" stroke="none" /><P d="M4 5l4 4-4 4M9 13h5" color="#222" /></Icon>
                명령:
                <PromptInput />
              </Prompt>
            </CommandMain>
            <Highlight />
          </Command>
        </Workspace>

        <Side>
          <Panel $grow={48}>
            <Head title="CAD View" />
            <Tree>
              <thead><tr><TreeHead>Item</TreeHead><TreeHead $width={6} aria-label="End" /></tr></thead>
              <tbody>
                <tr><TreeCell colSpan={2}><TreeLine $indent={10}><TreeIcon>{sheetIcon()}</TreeIcon><TreeText $mode="red">&nbsp;CIM 모드</TreeText></TreeLine></TreeCell></tr>
                <tr><TreeCell colSpan={2}>
                  <TreeLine $indent={3}>
                    <Expander aria-label="Collapse">{open}</Expander>
                    <TreeIcon $left={9}>{sheetIcon("A")}</TreeIcon>
                    <TreeText $mode="large">캐드도면</TreeText>
                    <TreeIcon $left={26}><Icon size={17} box={17}>{brackets}<rect x={3} y={4} width={11} height={9} /><P d="M11 4v9" w={2} /></Icon></TreeIcon>
                    <TreeIcon><Icon size={17} box={17}>{brackets}<rect x={3} y={4} width={11} height={9} fill="#14507f" stroke={c.blue} /><P d="M2.500 5h12" color={c.blue} w={2.500} /></Icon></TreeIcon>
                  </TreeLine>
                </TreeCell></tr>
                <tr><TreeCell colSpan={2}><TreeLine $indent={36}><TreeIcon>{folder}</TreeIcon><TreeText>cDrawing1</TreeText></TreeLine></TreeCell></tr>
                <tr><TreeCell colSpan={2}><TreeLine $indent={15}><Expander aria-label="Expand Sheet">{closed}</Expander><TreeIcon $left={9}>{folder}</TreeIcon><TreeText $mode="selected">Sheet</TreeText></TreeLine></TreeCell></tr>
                <tr><TreeCell colSpan={2}><TreeLine $indent={15}><Expander aria-label="Expand cDrawing2">{closed}</Expander><TreeIcon $left={9}>{folder}</TreeIcon><TreeText>cDrawing2</TreeText></TreeLine></TreeCell></tr>
              </tbody>
            </Tree>
          </Panel>
          <PropPanel $grow={50}>
            <Head title="특성" />
            <SelectionRow>
              <SelectionLabel>
                <PlainSelect aria-label="Selection"><option>선택 요소가 없습니다.</option></PlainSelect>
                {caret(9)}
              </SelectionLabel>
              <SelectionButton aria-label="Quick select"><Icon size={17}><rect x={1} y={1} width={18} height={18} strokeDasharray="2 1" /><F d="M3 3h6v6H3z" /><P d="M12 4h4v4h-4zM4 12h4v4H4zM12 12h4v4h-4z" /></Icon></SelectionButton>
              <SelectionButton aria-label="Single select"><Icon size={17}><g strokeDasharray="2 1"><rect x={4} y={1} width={15} height={15} /><P d="M1 5v14h14" /></g><Letter x={12} y={13} size={11}>1</Letter></Icon></SelectionButton>
              <SelectionButton aria-label="Select objects"><Icon size={17}><rect x={1} y={1} width={18} height={18} strokeDasharray="2 1" /><F d="M7 4l7 7-3 .5 2 4-2 1-2-4-2 2z" /></Icon></SelectionButton>
              <SelectionButton aria-label="Quick filter"><Icon size={17}><F d="M3 6l10 9-5 .5L4 20zM10 1h9l-3 4h3l-9 8 2-6H8z" /></Icon></SelectionButton>
            </SelectionRow>
            <Properties>
              <colgroup><col width={19} /><col width={138} /><col /></colgroup>
              <tbody>
                {groups.map((g) => (
                  <React.Fragment key={g.title}>
                    <tr><Gutter><Expander aria-label={`Collapse ${g.title}`}>{open}</Expander></Gutter><GroupTitle colSpan={2}>{g.title}</GroupTitle></tr>
                    {g.rows.map((r) => (
                      <tr key={r.name}>
                        <Gutter />
                        <PropName $dim={r.dim}>{r.name}</PropName>
                        <PropValue $dim={r.dim}>
                          <ValueLine>
                            {r.mark === "swatch" && <Swatch $width={12} $height={12} />}
                            {r.mark === "line" && <LineSample $width={62} />}
                            {r.value}
                          </ValueLine>
                        </PropValue>
                      </tr>
                    ))}
                  </React.Fragment>
                ))}
              </tbody>
            </Properties>
          </PropPanel>
        </Side>
      </Body>
    </Window>
  );
}
